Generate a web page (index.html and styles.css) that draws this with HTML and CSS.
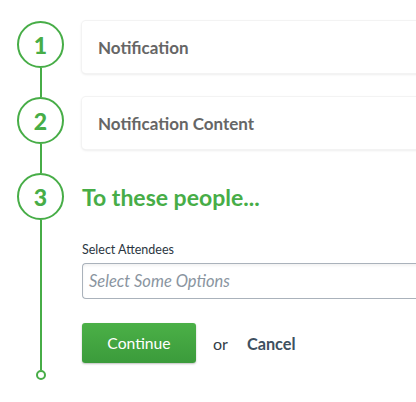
FILE: index.html
```html
<!DOCTYPE html>
<html>
<head>
<meta charset="utf-8">
<link rel="stylesheet" href="styles.css">
</head>
<body>
<div class="steps">
  <div class="step">
    <div class="marker"><div class="circle">1</div><div class="line"></div></div>
    <div class="content"><div class="card">Notification</div></div>
  </div>
  <div class="step">
    <div class="marker"><div class="circle">2</div><div class="line"></div></div>
    <div class="content"><div class="card">Notification Content</div></div>
  </div>
  <div class="step">
    <div class="marker"><div class="circle">3</div><div class="line"></div><div class="end"></div></div>
    <div class="content last">
      <h2 class="heading">To these people...</h2>
      <label class="label">Select Attendees</label>
      <div class="input">Select Some Options</div>
      <div class="actions">
        <button class="btn">Continue</button>
        <span class="or">or</span>
        <a class="cancel">Cancel</a>
      </div>
    </div>
  </div>
</div>
</body>
</html>
```
FILE: styles.css
```css
html, body { margin: 0; padding: 0; overflow: hidden; background: #fff; }
body { font-family: "Lato", "Liberation Sans", sans-serif; width: 416px; height: 402px; }
.steps { display: flex; flex-direction: column; padding-top: 21px; }
.step { display: flex; }
.marker { width: 82px; flex: none; display: flex; flex-direction: column; align-items: center; padding-right: 1px; box-sizing: border-box; }
.circle { width: 43px; height: 43px; border: 2px solid #47ad47; border-radius: 50%; display: flex; align-items: center; justify-content: center; font-weight: 900; font-size: 23px; color: #47ad47; flex: none; }
.line { width: 2px; flex: 1; background: #47ad47; }
.end { width: 6px; height: 6px; border: 2px solid #47ad47; border-radius: 50%; flex: none; }
.content { flex: 1; margin-right: -12px; padding-bottom: 24px; }
.card { height: 52px; border-radius: 4px; background: #fff; box-shadow: 0 0 0 1px #f3f3f3, 0 1px 3px rgba(0,0,0,0.14); display: flex; align-items: center; padding-left: 16px; font-weight: 700; font-size: 17px; color: #666; }
.heading { margin: 0; height: 47px; line-height: 48px; font-size: 23px; font-weight: 700; color: #47ad47; }
.label { display: block; margin-top: 22px; font-size: 12.5px; line-height: 16px; color: #2b3641; }
.input { margin-top: 5px; height: 34px; border: 1px solid #aab2bb; border-right: none; border-radius: 4px 0 0 4px; box-shadow: inset 0 2px 3px rgba(0,0,0,0.05); display: flex; align-items: center; padding-left: 6px; font-style: italic; font-size: 16.5px; color: #8a959f; }
.actions { margin-top: 24px; display: flex; align-items: center; }
.btn { width: 114px; height: 40px; border: none; border-radius: 3px; background: linear-gradient(#4bb047, #3b9b3b); box-shadow: 0 1px 2px rgba(0,0,0,0.25); color: #fff; font-family: inherit; font-size: 15.7px; padding: 0; }
.or { margin-left: 17px; font-size: 16px; color: #333d47; }
.cancel { margin-left: 19px; font-size: 16.3px; font-weight: 700; color: #3e5060; }
.last { padding-bottom: 17px; }
```
